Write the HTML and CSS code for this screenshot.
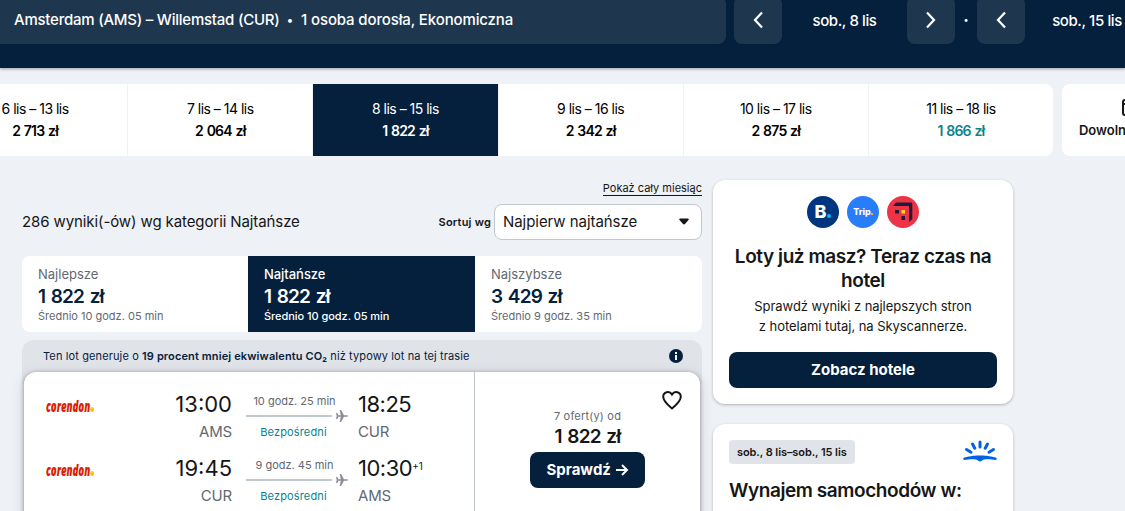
FILE: index.html
```html
<!DOCTYPE html>
<html lang="pl">
<head>
    <meta charset="UTF-8">
    <meta name="viewport" content="width=device-width, initial-scale=1.0">
    <title>Amsterdam – Willemstad</title>
    <link rel="stylesheet" href="styles.css">
</head>
<body>
    <header class="header">
        <button class="search-summary"><span class="route">Amsterdam (AMS) – Willemstad (CUR)</span><span class="dot">•</span><span class="travellers">1 osoba dorosła, Ekonomiczna</span></button>
        <div class="date-picker">
            <button class="arrow"><svg width="24" height="24" viewBox="0 0 24 24"><path d="M16 4.500 9 12l7 7.500"/></svg></button>
            <span class="date">sob., 8 lis</span>
            <button class="arrow"><svg width="24" height="24" viewBox="0 0 24 24"><path d="M8 4.500l7 7.500-7 7.500"/></svg></button>
        </div>
        <span class="sep">•</span>
        <div class="date-picker">
            <button class="arrow"><svg width="24" height="24" viewBox="0 0 24 24"><path d="M16 4.500 9 12l7 7.500"/></svg></button>
            <span class="date date-return">sob., 15 lis</span>
        </div>
    </header>

    <div class="price-strip">
        <div class="strip-days">
            <div class="day"><span>6 lis – 13 lis</span><b>2 713 zł</b></div>
            <div class="day"><span>7 lis – 14 lis</span><b>2 064 zł</b></div>
            <div class="day selected"><span>8 lis – 15 lis</span><b>1 822 zł</b></div>
            <div class="day"><span>9 lis – 16 lis</span><b>2 342 zł</b></div>
            <div class="day"><span>10 lis – 17 lis</span><b>2 875 zł</b></div>
            <div class="day cheap"><span>11 lis – 18 lis</span><b>1 866 zł</b></div>
        </div>
        <div class="any-date">
            <svg width="20" height="20" viewBox="0 0 20 20"><rect x="1" y="3" width="18" height="15" rx="2"/><path d="M1 7h18"/></svg>
            <b>Dowolny miesiąc</b>
        </div>
    </div>

    <main class="content">
        <section class="results">
            <div class="month-row"><a class="month-link">Pokaż cały miesiąc</a></div>
            <div class="toolbar">
                <span class="count">286 wyniki(-ów) wg kategorii Najtańsze</span>
                <label class="sort-label">Sortuj wg</label>
                <div class="sort-select"><span>Najpierw najtańsze</span><svg width="10" height="7" viewBox="0 0 10 7"><path d="M1.200.5h7.600c.9 0 1.300.9.700 1.500L6 6c-.6.6-1.400.6-2 0L.5 2C-.1 1.400.3.5 1.200.5z"/></svg></div>
            </div>

            <div class="tabs">
                <div class="tab"><span class="tab-name">Najlepsze</span><b>1 822 zł</b><small>Średnio 10 godz. 05 min</small></div>
                <div class="tab active"><span class="tab-name">Najtańsze</span><b>1 822 zł</b><small>Średnio 10 godz. 05 min</small></div>
                <div class="tab"><span class="tab-name">Najszybsze</span><b>3 429 zł</b><small>Średnio 9 godz. 35 min</small></div>
            </div>

            <div class="eco">
                <div class="eco-bar">
                    <span>Ten lot generuje o <b>19 procent mniej ekwiwalentu CO₂</b> niż typowy lot na tej trasie</span>
                    <svg width="14" height="14" viewBox="0 0 14 14"><circle cx="7" cy="7" r="7" fill="#05203c"/><path d="M6 6h2v5H6zM6 3h2v2H6z" fill="#fff"/></svg>
                </div>
                <article class="ticket">
                    <div class="legs">
                        <div class="leg">
                            <span class="airline">corendon<i></i></span>
                            <div class="stop depart"><span class="time">13:00</span><span class="code">AMS</span></div>
                            <div class="flight">
                                <span class="duration">10 godz. 25 min</span>
                                <div class="line"><svg width="12" height="12" viewBox="0 0 12 12"><path d="M0 3h1.300l1.200 2.200h2.300L3.700 0h1.400l2.800 5.200h3.100c1.300 0 1.300 1.600 0 1.600H7.900L5.100 12H3.700l1.100-5.200H2.500L1.300 9H0l.7-3z"/></svg></div>
                                <span class="direct">Bezpośredni</span>
                            </div>
                            <div class="stop"><span class="time">18:25</span><span class="code">CUR</span></div>
                        </div>
                        <div class="leg">
                            <span class="airline">corendon<i></i></span>
                            <div class="stop depart"><span class="time">19:45</span><span class="code">CUR</span></div>
                            <div class="flight">
                                <span class="duration">9 godz. 45 min</span>
                                <div class="line"><svg width="12" height="12" viewBox="0 0 12 12"><path d="M0 3h1.300l1.200 2.200h2.300L3.700 0h1.400l2.800 5.200h3.100c1.300 0 1.300 1.600 0 1.600H7.900L5.100 12H3.700l1.100-5.200H2.500L1.300 9H0l.7-3z"/></svg></div>
                                <span class="direct">Bezpośredni</span>
                            </div>
                            <div class="stop"><span class="time">10:30<sup>+1</sup></span><span class="code">AMS</span></div>
                        </div>
                    </div>
                    <div class="offer">
                        <svg class="heart" width="24" height="24" viewBox="0 0 24 24"><path d="M12 20.500C9 18 3.200 13.500 3.200 8.800c0-5 6.300-6.600 8.800-2.300 2.500-4.300 8.800-2.700 8.800 2.300 0 4.700-5.800 9.200-8.800 11.700z"/></svg>
                        <span class="offer-count">7 ofert(y) od</span>
                        <b class="offer-price">1 822 zł</b>
                        <button class="btn check">Sprawdź <svg width="14" height="14" viewBox="0 0 14 14"><path d="M1 7h11M7 2l5 5-5 5"/></svg></button>
                    </div>
                </article>
            </div>
        </section>

        <aside class="sidebar">
            <div class="card hotels">
                <div class="partners">
                    <span class="partner booking">B<i></i></span>
                    <span class="partner trip">Trip<i></i></span>
                    <svg width="32" height="32" viewBox="0 0 32 32"><circle cx="16" cy="16" r="16" fill="#ef3346"/><path d="M6 10l3-3.500h15c.8 0 1.300.5 1.300 1.300V23L22 26V10z" fill="#1f1b3a"/><path d="M8 14h4v3.500H8zM14.500 20h3.500v4h-3.500z" fill="#1f1b3a"/><path d="M14.500 14h3.500v3.500h-3.500z" fill="#ffd21f"/></svg>
                </div>
                <h2>Loty już masz? Teraz czas na hotel</h2>
                <p>Sprawdź wyniki z najlepszych stron<br>z hotelami tutaj, na Skyscannerze.</p>
                <button class="btn hotels-btn">Zobacz hotele</button>
            </div>
            <div class="card cars">
                <div class="cars-top">
                    <span class="badge">sob., 8 lis–sob., 15 lis</span>
                    <svg width="34" height="22" viewBox="0 0 34 22"><path d="M17 2v5M9.500 4l2.300 4.300M24.500 4l-2.300 4.300M3.500 9.500L8 12.200M30.500 9.500L26 12.200" fill="none" stroke="#0062e3" stroke-width="3" stroke-linecap="round"/><path d="M1.200 17.600C8 15.800 12 15.500 17 15.500s9 .3 15.800 2.100c1.300.4 1.200 2.300-.3 2.400-3.500-.5-8-1.300-11.500-.4C19 20.300 18.500 21.500 17 21.500s-2-1.200-4-1.900c-3.500-.9-8-.1-11.500.4C0 19.900-.1 18 1.200 17.600z" fill="#0062e3"/></svg>
                </div>
                <h2>Wynajem samochodów w:</h2>
            </div>
        </aside>
    </main>
</body>
</html>
```
FILE: styles.css
```css
* {
    box-sizing: border-box;
}
body {
    margin: 0;
    height: 511px;
    overflow: hidden;
    background-color: #eef1f6;
    color: #161616;
    font-family: Inter, "Liberation Sans", sans-serif;
    font-size: 16px;
}
button {
    border: none;
    padding: 0;
    font-family: inherit;
    cursor: pointer;
}

/* header */
.header {
    display: flex;
    align-items: flex-start;
    margin-top: -4px;
    height: 72px;
    background-color: #05203c;
    color: white;
    box-shadow: 0 1px 3px rgba(0, 0, 0, 0.35);
}
.search-summary {
    display: flex;
    flex-shrink: 0;
    align-items: center;
    width: 726px;
    height: 48px;
    margin-right: 8px;
    padding: 0 0 1px 14px;
    border-radius: 0 8px 8px 0;
    background-color: #1e374f;
    color: white;
    font-size: 15px;
    font-weight: 500;
    white-space: nowrap;
}
.route {
    letter-spacing: -0.23px;
}
.dot {
    margin: 0 8px 0 7px;
    font-size: 12px;
}
.travellers {
    letter-spacing: -0.13px;
}
.date-picker {
    display: flex;
    flex-shrink: 0;
    align-items: center;
}
.arrow {
    display: flex;
    align-items: center;
    justify-content: center;
    width: 48px;
    height: 48px;
    border-radius: 8px;
    background-color: #1e374f;
}
.arrow svg {
    fill: none;
    stroke: white;
    stroke-width: 2.2;
}
.date {
    width: 125px;
    text-align: center;
    font-size: 15px;
    font-weight: 500;
    letter-spacing: -0.4px;
}
.date-return {
    width: 124px;
}
.sep {
    flex-shrink: 0;
    width: 22px;
    line-height: 48px;
    text-align: center;
    font-size: 9px;
}

/* price strip */
.price-strip {
    display: flex;
    gap: 9px;
    width: 1300px;
    margin: 16px 0 0 -58px;
}
.strip-days {
    display: flex;
    width: 1111px;
    height: 72px;
    border-radius: 8px;
    background-color: white;
    overflow: hidden;
}
.day {
    flex: 1;
    padding-top: 14px;
    border-left: 1px solid #eff1f2;
    text-align: center;
    font-size: 14px;
    line-height: 22px;
    letter-spacing: -0.5px;
    color: #000;
}
.day span, .day b {
    display: block;
}
.day b {
    font-weight: 600;
    letter-spacing: -0.8px;
    word-spacing: 1px;
}
.day.selected {
    background-color: #05203c;
    color: white;
}
.day.cheap b {
    color: #0c838a;
}
.any-date {
    display: flex;
    flex-direction: column;
    align-items: center;
    width: 140px;
    padding-top: 13px;
    border-radius: 8px;
    background-color: white;
    font-size: 13px;
    line-height: 26px;
}
.any-date b {
    font-weight: 600;
}
.any-date svg {
    fill: none;
    stroke: #161616;
    stroke-width: 2;
}

.content {
    display: flex;
    align-items: flex-start;
    gap: 11px;
    padding: 24px 0 0 22px;
}
.results {
    width: 680px;
}
.month-row {
    display: flex;
    justify-content: flex-end;
    height: 16px;
}
.month-link {
    padding-top: 1px;
    border-bottom: 1px solid #161616;
    font-size: 11px;
    line-height: 14px;
}
.toolbar {
    display: flex;
    align-items: center;
    height: 36px;
    margin-top: 8px;
}
.count {
    flex: 1;
    padding-bottom: 2px;
    font-size: 15px;
    letter-spacing: -0.1px;
}
.sort-label {
    margin-right: 3px;
    font-size: 11px;
    font-weight: 600;
    letter-spacing: 0.2px;
}
.sort-select {
    display: flex;
    align-items: center;
    justify-content: space-between;
    width: 208px;
    height: 36px;
    padding: 0 12px 1px 8px;
    border: 1px solid #c1c7cf;
    border-radius: 8px;
    background-color: white;
    font-size: 15px;
    letter-spacing: -0.05px;
}
.sort-select svg {
    fill: #161616;
}

/* sort tabs */
.tabs {
    display: grid;
    grid-template-columns: 226px 227px 1fr;
    height: 76px;
    margin-top: 16px;
    border-radius: 8px;
    background-color: white;
    overflow: hidden;
}
.tab {
    display: flex;
    flex-direction: column;
    padding: 8px 0 0 16px;
    color: #626971;
}
.tab-name {
    font-size: 13px;
    line-height: 20px;
}
.tab b {
    padding-top: 1px;
    color: #05203c;
    font-size: 19px;
    font-weight: 600;
    line-height: 24px;
    letter-spacing: -0.8px;
    word-spacing: 1.5px;
}
.tab small {
    margin-top: -1px;
    font-size: 11px;
    line-height: 16px;
}
.tab.active, .tab.active b {
    background-color: #05203c;
    color: white;
}
.tab.active .tab-name, .tab.active small {
    font-weight: 500;
    letter-spacing: -0.05px;
}

/* ticket */
.eco {
    height: 200px;
    margin-top: 8px;
}
.eco-bar {
    display: flex;
    justify-content: space-between;
    height: 44px;
    padding: 0 19px 0 21px;
    border-radius: 12px 12px 0 0;
    background-color: #e0e4e9;
    color: #05203c;
    font-size: 11px;
    line-height: 32px;
    letter-spacing: 0.12px;
}
.eco-bar b {
    font-weight: 600;
}
.eco-bar svg {
    margin-top: 9px;
}
.ticket {
    display: flex;
    position: relative;
    height: 200px;
    margin: -12px 2px 0;
    border-radius: 12px;
    background-color: white;
    box-shadow: 0 1px 4px rgba(37, 32, 31, 0.45), 0 4px 14px rgba(37, 32, 31, 0.15);
}
.legs {
    width: 451px;
    padding: 18px 0 0 22px;
    border-right: 1px solid #c1c7cf;
}
.leg {
    display: flex;
    height: 64px;
}
.airline {
    width: 100px;
    padding-top: 7px;
    color: #d81e05;
    font-family: "Open Sans", sans-serif;
    font-size: 15px;
    font-style: italic;
    font-weight: 800;
    line-height: 18px;
    letter-spacing: -0.1px;
    transform: scaleX(0.65);
    transform-origin: left;
}
.airline i {
    display: inline-block;
    width: 6px;
    height: 5px;
    border-radius: 50%;
    background-color: #ffc20e;
}
.stop {
    display: flex;
    flex-direction: column;
    width: 86px;
}
.stop.depart {
    align-items: flex-end;
}
.time {
    font-size: 22px;
    line-height: 28px;
    letter-spacing: -0.5px;
}
.depart .time {
    letter-spacing: 0;
}
.time sup {
    font-size: 10px;
    line-height: 0;
    letter-spacing: 0;
    vertical-align: 6px;
}
.code {
    color: #626971;
    font-size: 15px;
    line-height: 27px;
    letter-spacing: -0.2px;
}
.flight {
    display: flex;
    flex-direction: column;
    align-items: center;
    width: 102px;
    margin: 3px 10px 0 14px;
    color: #626971;
    font-size: 11px;
    line-height: 16px;
}
.line {
    display: flex;
    align-items: center;
    gap: 4px;
    width: 102px;
    height: 13px;
}
.line::before {
    content: "";
    width: 86px;
    height: 2px;
    background-color: #c1c7cf;
}
.line svg {
    fill: #8e8a9c;
}
.direct {
    margin: 2px 7px 0 0;
    color: #0c838a;
    letter-spacing: 0.15px;
}
.duration {
    margin-right: 5px;
}
.offer {
    display: flex;
    flex: 1;
    flex-direction: column;
    align-items: center;
    padding-top: 36px;
}
.heart {
    position: absolute;
    top: 16px;
    right: 16px;
    fill: none;
    stroke: #161616;
    stroke-width: 2;
}
.offer-count {
    color: #626971;
    font-size: 11px;
    line-height: 16px;
    letter-spacing: 0.2px;
}
.offer-price {
    padding-top: 1px;
    font-size: 19px;
    font-weight: 600;
    line-height: 24px;
    letter-spacing: -0.8px;
    word-spacing: 1.5px;
}
.btn {
    height: 36px;
    padding-bottom: 1px;
    border-radius: 8px;
    background-color: #05203c;
    color: white;
    font-size: 15px;
    font-weight: 700;
}
.check {
    width: 115px;
    margin-top: 3px;
}
.check svg {
    fill: none;
    stroke: white;
    stroke-width: 2;
    vertical-align: -2px;
}

/* sidebar */
.sidebar {
    width: 300px;
}
.card {
    padding: 16px;
    border-radius: 12px;
    background-color: white;
    box-shadow: 0 1px 3px rgba(37, 32, 31, 0.3);
}
.card h2 {
    margin: 0;
    font-size: 19px;
    font-weight: 600;
    line-height: 24px;
    letter-spacing: -0.42px;
}
.hotels {
    height: 224px;
    text-align: center;
}
.partners {
    display: flex;
    justify-content: center;
    gap: 8px;
    margin-bottom: 17px;
}
.partner {
    display: flex;
    align-items: baseline;
    justify-content: center;
    width: 32px;
    height: 32px;
    border-radius: 50%;
    color: white;
    font-weight: 800;
    line-height: 32px;
}
.booking {
    background-color: #003580;
    font-size: 18px;
}
.booking i {
    width: 4px;
    height: 4px;
    margin-left: 1px;
    border-radius: 50%;
    background-color: #00b9f5;
}
.trip {
    background-color: #287dfa;
    font-size: 9px;
}
.trip i {
    width: 2px;
    height: 2px;
    background-color: #ffb400;
}
.hotels p {
    margin: 3px 0 16px;
    font-size: 13px;
    line-height: 20px;
    letter-spacing: -0.05px;
}
.hotels-btn {
    width: 100%;
}
.cars {
    height: 120px;
    margin-top: 20px;
}
.cars-top {
    display: flex;
    justify-content: space-between;
    margin-bottom: 15px;
}
.badge {
    height: 24px;
    padding: 0 8px;
    border-radius: 4px;
    background-color: #e0e4e9;
    font-size: 11px;
    font-weight: 600;
    line-height: 24px;
    letter-spacing: -0.08px;
}
```
